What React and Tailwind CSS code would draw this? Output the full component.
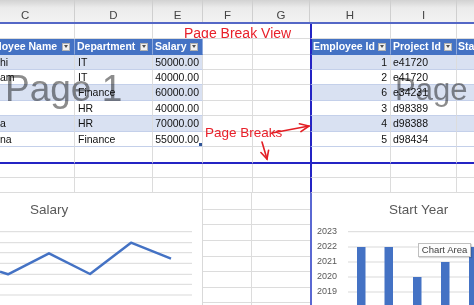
import React from "react";

const COLS = "grid grid-cols-[75px_78px_50px_50px_57px_81px_66px_17px]";
const BREAK = "border-l-2 border-l-[#2424c4]";
const BAND = "bg-[#d9e1f2]";
const TROW = "border-b-[#c4d0ea]";

const letters = ["C", "D", "E", "F", "G", "H", "I", ""];

const leftRows = [
  ["hi", "IT", "50000.00"],
  ["am", "IT", "40000.00"],
  ["", "Finance", "60000.00"],
  ["", "HR", "40000.00"],
  ["a", "HR", "70000.00"],
  ["na", "Finance", "55000.00"],
];
const rightRows = [
  ["1", "e41720"],
  ["2", "e41720"],
  ["6", "e34231"],
  ["3", "d98389"],
  ["4", "d98388"],
  ["5", "d98434"],
];
const rowHeights = ["h-[15px]", "h-[15px]", "h-[16px]", "h-[15px]", "h-[16px]", "h-[15px]"];
const lowerRows = ["h-[17px]", "h-[15px]", "h-[16px]", "h-[16px]", "h-[15px]", "h-[16px]", "h-[15px]", "h-[15px]"];

function Cell({ children, className = "", edge = true }) {
  return (
    <div
      className={`flex min-w-0 items-center overflow-hidden whitespace-nowrap border-b border-[#dcdcdc] ${
        edge ? "border-r" : ""
      } ${className}`}
    >
      {children}
    </div>
  );
}

function Filter() {
  return (
    <span className="ml-auto mr-[4px] flex size-[8px] shrink-0 items-center justify-center border border-[#b0b0b0] bg-[#f0f0f0]">
      <span className="h-0 w-0 border-x-[2.5px] border-t-[3px] border-x-transparent border-t-[#505050]" />
    </span>
  );
}

function TH({ children, shift = "pl-[2px]", filter = true, edge = true, className = "" }) {
  return (
    <Cell
      edge={edge}
      className={`bg-[#4472c4] border-b-[#4472c4] border-r-[#8faadc] font-bold text-white ${className}`}
    >
      <span className={shift}>{children}</span>
      {filter ? <Filter /> : null}
    </Cell>
  );
}

function BlankRow({ h, bottom = "" }) {
  return (
    <div className={`${COLS} ${h}`}>
      <Cell className={bottom} />
      <Cell className={bottom} />
      <Cell className={bottom} />
      <Cell className={bottom} />
      <Cell edge={false} className={bottom} />
      <Cell className={`${BREAK} ${bottom}`} />
      <Cell className={bottom} />
      <Cell edge={false} className={bottom} />
    </div>
  );
}

function ColumnHeader() {
  return (
    <div
      className={`${COLS} h-[24px] border-b-2 border-[#5467c6] bg-[linear-gradient(to_bottom,#d2d2d2,#ebebeb_35%,#f2f2f2)] text-[11.5px] leading-none text-[#444]`}
    >
      {letters.map((l, i) => (
        <div
          key={i}
          className={`flex pt-[10px] ${i === 0 ? "pl-[21px]" : "justify-center"} ${
            i < 7 ? "border-r border-[#cfcfcf]" : ""
          }`}
        >
          {l}
        </div>
      ))}
    </div>
  );
}

function SalaryChart() {
  const grid = [8.7, 19.7, 29.7, 40.3, 51.3, 61.3, 72];
  return (
    <div className="h-full w-[203px] shrink-0 border-r border-[#d9d9d9] bg-white">
      <p className="h-[30px] pl-[30px] pt-[10px] text-[13.5px] leading-none text-[#595959]">Salary</p>
      <svg width="202" height="82" className="block">
        {grid.map((y) => (
          <line key={y} x1="0" x2="192" y1={y} y2={y} stroke="#d9d9d9" strokeWidth="1" />
        ))}
        <polyline
          points="0,48.7 8,51.3 49,30.3 90,51 131,19.7 171,35.7"
          fill="none"
          stroke="#4472c4"
          strokeWidth="2.5"
          strokeLinejoin="round"
        />
      </svg>
    </div>
  );
}

function StartYearChart() {
  const years = ["2023", "2022", "2021", "2020", "2019"];
  const grid = [7.7, 23, 38, 53, 68];
  const bars = [
    [9, 23],
    [36.5, 23],
    [65, 53],
    [93, 38],
    [121, 23],
  ];
  return (
    <div className="relative h-full flex-1 border-l-2 border-[#5a68d2] bg-white">
      <p className="h-[31px] pl-[77px] pt-[10px] text-[13.5px] leading-none text-[#595959]">Start Year</p>
      <div className="flex">
        <div className="flex w-[25px] flex-col items-end text-[9px] leading-[15px] text-[#595959]">
          {years.map((y) => (
            <span key={y} className="h-[15px]">
              {y}
            </span>
          ))}
        </div>
        <svg width="126" height="81" className="ml-[11px] block">
          {grid.map((y) => (
            <line key={y} x1="0" x2="126" y1={y} y2={y} stroke="#d9d9d9" strokeWidth="1" />
          ))}
          {bars.map(([x, top]) => (
            <rect key={x} x={x} y={top} width="8.5" height={81 - top} fill="#4472c4" />
          ))}
        </svg>
      </div>
      <div className="absolute left-[106px] top-[50px] flex h-[14px] w-[53px] items-center justify-center border border-[#bfbfbf] bg-[#fdfdfd] text-[9.5px] leading-none text-[#404040] shadow-[1px_1px_1px_rgba(0,0,0,0.15)]">
        Chart Area
      </div>
    </div>
  );
}

export default function App() {
  return (
    <div className="relative h-[305px] w-[474px] overflow-hidden bg-white font-['Liberation_Sans',Arial,sans-serif] text-[10.5px] leading-none text-[#111]">
      <ColumnHeader />

      <div className={`${COLS} h-[15px]`}>
        <Cell />
        <Cell />
        <Cell edge={false} className="col-span-3 items-start">
          <span className="pl-[31px] pt-[1.5px] text-[14px] leading-none text-[#e8202a]">Page Break View</span>
        </Cell>
        <Cell className={BREAK} />
        <Cell />
        <Cell edge={false} />
      </div>

      <div className={`${COLS} h-[16px]`}>
        <TH shift="ml-[-24px]">Employee Name</TH>
        <TH>Department</TH>
        <TH>Salary</TH>
        <Cell />
        <Cell edge={false} />
        <TH shift="pl-[1px]" className={BREAK}>
          Employee Id
        </TH>
        <TH>Project Id</TH>
        <TH shift="pl-[1px]" filter={false} edge={false}>
          Status
        </TH>
      </div>

      {leftRows.map((r, i) => {
        const bg = i % 2 === 0 ? BAND : "";
        const last = i === leftRows.length - 1;
        return (
          <div key={i} className={`${COLS} ${rowHeights[i]}`}>
            <Cell className={`${bg} ${TROW}`}>{r[0]}</Cell>
            <Cell className={`${bg} ${TROW} pl-[3px]`}>{r[1]}</Cell>
            <Cell className={`${bg} ${TROW} relative justify-end pr-[3px]`}>
              {r[2]}
              {last ? <span className="absolute bottom-0 right-0 size-[3px] bg-[#2f5597]" /> : null}
            </Cell>
            <Cell />
            <Cell edge={false} />
            <Cell className={`${bg} ${TROW} ${BREAK} justify-end pr-[3px]`}>{rightRows[i][0]}</Cell>
            <Cell className={`${bg} ${TROW} pl-[2px]`}>{rightRows[i][1]}</Cell>
            <Cell edge={false} className={`${bg} ${TROW}`} />
          </div>
        );
      })}

      <BlankRow h="h-[17px]" bottom="border-b-2 border-b-[#2424c4]" />
      <BlankRow h="h-[14px]" />
      <BlankRow h="h-[15px]" />

      <div className="flex h-[112px]">
        <SalaryChart />
        <div className="w-[107px] shrink-0">
          {lowerRows.map((h, i) => (
            <div key={i} className={`grid grid-cols-[49px_58px] ${h}`}>
              <div className="border-b border-r border-[#dcdcdc]" />
              <div className="border-b border-[#dcdcdc]" />
            </div>
          ))}
        </div>
        <StartYearChart />
      </div>

      {/* print-preview watermarks */}
      <span className="pointer-events-none absolute left-[5px] top-[70px] whitespace-nowrap text-[37px] leading-none text-[#8c8c8c] mix-blend-multiply">
        Page 1
      </span>
      <span className="pointer-events-none absolute left-[395px] top-[74px] whitespace-nowrap text-[31px] leading-none text-[#8c8c8c] mix-blend-multiply">
        Page 2
      </span>

      {/* annotation */}
      <span className="absolute left-[205px] top-[126px] whitespace-nowrap text-[13.5px] leading-none text-[#e8202a]">
        Page Breaks
      </span>
      <svg className="absolute left-[255px] top-[118px]" width="60" height="46" fill="none" stroke="#e31e24" strokeWidth="1.6" strokeLinecap="round">
        <line x1="17" y1="15" x2="54" y2="8" />
        <polyline points="45.9,13.6 54,8 44.4,5.8" />
        <line x1="7" y1="24" x2="12" y2="41" />
        <polyline points="13.6,32.2 12,41 5.9,34.5" />
      </svg>
    </div>
  );
}
